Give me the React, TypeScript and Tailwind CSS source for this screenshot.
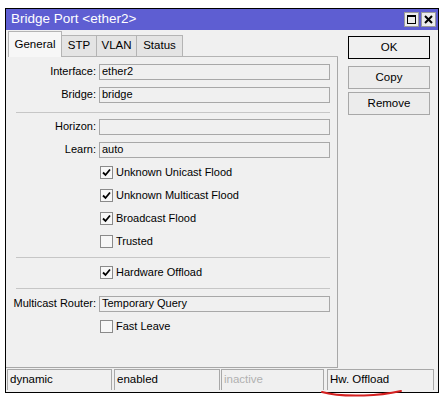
import React from 'react';

const Check = () => (
  <svg width="9" height="9" viewBox="0 0 9 9">
    <path d="M1 4.5 L3.5 7 L8 1.5" fill="none" stroke="#000" strokeWidth="1.8" />
  </svg>
);

const CheckRow = ({ label, checked }: { label: string; checked?: boolean }) => (
  <div className="h-[23px] flex items-center pl-[93px]">
    <div className="w-[13px] h-[13px] border border-[#8a8a8a] bg-[#f7f7f7] flex items-center justify-center">
      {checked && <Check />}
    </div>
    <span className="ml-[3px]">{label}</span>
  </div>
);

const FieldRow = ({ label, value }: { label: string; value: string }) => (
  <div className="h-[23px] flex items-center">
    <div className="w-[89px] text-right">{label}</div>
    <div className="ml-[3px] w-[231px] h-[16px] border border-[#a8a8a8] bg-[#f0f0f0] flex items-center pl-[2px] leading-none">
      {value}
    </div>
  </div>
);

const Sep = ({ top, bottom }: { top: string; bottom: string }) => (
  <div className={`${top} ${bottom} ml-[9px] w-[314px] h-px bg-[#c6c6c6]`} />
);

export default function App() {
  return (
    <div className="w-[441px] h-[399px] bg-white relative text-[11px] text-black font-['Liberation_Sans',Arial,sans-serif]">
      <div className="pt-[8px] pl-[5px]">
        <div className="w-[434px] h-[385px] border border-black bg-[#f0f0f0] flex flex-col">
          {/* title bar */}
          <div className="h-[21px] bg-[#5e5ed2] flex items-center pl-[5px] pr-[2px] text-white text-[13.5px]">
            <span>Bridge Port &lt;ether2&gt;</span>
            <div className="ml-auto flex gap-[2px]">
              <div className="w-[15px] h-[15px] bg-[#ececec] border border-[#9a9a9a] flex items-center justify-center">
                <div className="w-[9px] h-[9px] border border-black border-t-2" />
              </div>
              <div className="w-[15px] h-[15px] bg-[#ececec] border border-[#9a9a9a] flex items-center justify-center">
                <svg width="9" height="9" viewBox="0 0 9 9">
                  <path d="M1 1 L8 8 M8 1 L1 8" stroke="#000" strokeWidth="2" />
                </svg>
              </div>
            </div>
          </div>

          <div className="flex">
            {/* left column */}
            <div className="w-[332px] flex flex-col">
              <div className="h-[27px] flex items-end pl-[2px]">
                <div className="h-[26px] w-[54px] bg-[#f7f7f7] border border-b-0 border-[#b4b4b4] flex items-center justify-center text-[11.5px]">
                  General
                </div>
                <div className="h-[22px] w-[35px] bg-[#e4e4e4] border-t border-r border-b border-[#b4b4b4] flex items-center justify-center text-[11.5px]">
                  STP
                </div>
                <div className="h-[22px] w-[40px] bg-[#e4e4e4] border-t border-r border-b border-[#b4b4b4] flex items-center justify-center text-[11.5px]">
                  VLAN
                </div>
                <div className="h-[22px] w-[46px] bg-[#e4e4e4] border-t border-r border-b border-[#b4b4b4] flex items-center justify-center text-[11.5px]">
                  Status
                </div>
                <div className="flex-1 border-b border-[#b4b4b4]" />
              </div>
              <div className="h-[311px] border-r border-b border-[#a8a8a8] pl-[1px] pt-[3px] flex flex-col">
                <FieldRow label="Interface:" value="ether2" />
                <FieldRow label="Bridge:" value="bridge" />
                <Sep top="mt-[6px]" bottom="mb-[2px]" />
                <FieldRow label="Horizon:" value="" />
                <FieldRow label="Learn:" value="auto" />
                <CheckRow label="Unknown Unicast Flood" checked />
                <CheckRow label="Unknown Multicast Flood" checked />
                <CheckRow label="Broadcast Flood" checked />
                <CheckRow label="Trusted" />
                <Sep top="mt-[4px]" bottom="mb-[3px]" />
                <CheckRow label="Hardware Offload" checked />
                <Sep top="mt-[4px]" bottom="mb-[3px]" />
                <FieldRow label="Multicast Router:" value="Temporary Query" />
                <CheckRow label="Fast Leave" />
              </div>
            </div>

            {/* right column */}
            <div className="ml-[10px] pt-[6px] flex flex-col w-[82px]">
              <div className="h-[23px] border border-black bg-[#f0f0f0] flex items-center justify-center text-[11.5px]">
                OK
              </div>
              <div className="mt-[7px] h-[23px] border border-[#a8a8a8] bg-[#ececec] flex items-center justify-center text-[11.5px]">
                Copy
              </div>
              <div className="mt-[3px] h-[23px] border border-[#a8a8a8] bg-[#ececec] flex items-center justify-center text-[11.5px]">
                Remove
              </div>
            </div>
          </div>

          {/* status bar */}
          <div className="mt-px h-[21px] flex pl-[1px] text-[11.5px]">
            <div className="w-[105px] border-t border-l border-r border-[#a8a8a8] flex items-center pl-[2px]">dynamic</div>
            <div className="ml-[2px] w-[106px] border-t border-l border-r border-[#a8a8a8] flex items-center pl-[2px]">enabled</div>
            <div className="ml-px w-[103px] border-t border-l border-r border-[#a8a8a8] flex items-center pl-[2px] text-[#b0b0b0]">inactive</div>
            <div className="ml-[3px] w-[107px] border-t border-l border-r border-[#a8a8a8] flex items-center pl-[2px]">Hw. Offload</div>
          </div>
        </div>
      </div>

      {/* red hand-drawn underline annotation */}
      <svg className="absolute left-[318px] top-[388px]" width="90" height="10" viewBox="0 0 90 10">
        <path d="M4 4 C 14 7, 28 8, 46 7.5 S 74 5, 83 3" fill="none" stroke="#d42020" strokeWidth="2" strokeLinecap="round" />
      </svg>
    </div>
  );
}
